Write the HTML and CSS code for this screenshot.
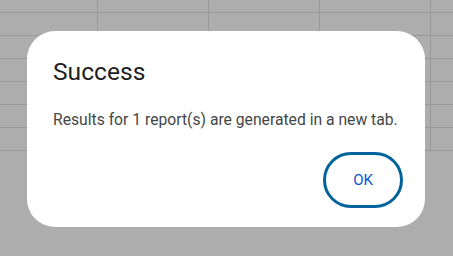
FILE: index.html
```html
<!DOCTYPE html>
<html lang="en">
<head>
    <meta charset="UTF-8">
    <meta name="viewport" content="width=device-width, initial-scale=1.0">
    <title>Success</title>
    <link rel="stylesheet" href="styles.css">
</head>
<body>
    <div class="sheet"></div>

    <div class="dialog" role="dialog">
        <h2 class="dialog-title">Success</h2>
        <p class="dialog-text">Results for 1 report(s) are generated in a new tab.</p>
        <div class="dialog-actions">
            <button class="ok-button">OK</button>
        </div>
    </div>
</body>
</html>
```

FILE: styles.css
```css
* {
    margin: 0;
    padding: 0;
    box-sizing: border-box;
}

body {
    font-family: Roboto, "Noto Sans", sans-serif;
    background: #adadad;
    width: 453px;
    height: 256px;
    position: relative;
    overflow: hidden;
}

.sheet {
    height: 151px;
    background-image:
        linear-gradient(#999999 1px, transparent 1px),
        linear-gradient(90deg, #999999 1px, transparent 1px);
    background-size: 100% 23px, 111px 100%;
    background-position: 0 12px, 97px 0;
}

.dialog {
    position: absolute;
    top: 31px;
    left: 27px;
    width: 398px;
    height: 196px;
    background: #ffffff;
    border-radius: 28px;
    padding: 25px 22px 19px 26px;
    display: flex;
    flex-direction: column;
}

.dialog-title {
    font-size: 24.6px;
    font-weight: 400;
    line-height: 32px;
    color: #1f1f1f;
}

.dialog-text {
    margin-top: 21px;
    font-size: 15.7px;
    line-height: 22px;
    color: #444746;
}

.dialog-actions {
    margin-top: auto;
    display: flex;
    justify-content: flex-end;
}

.ok-button {
    width: 80px;
    height: 56px;
    border: 3px solid #00639b;
    border-radius: 28px;
    background: #ffffff;
    color: #0b57d0;
    font-family: inherit;
    font-size: 15px;
    font-weight: 400;
}
```
